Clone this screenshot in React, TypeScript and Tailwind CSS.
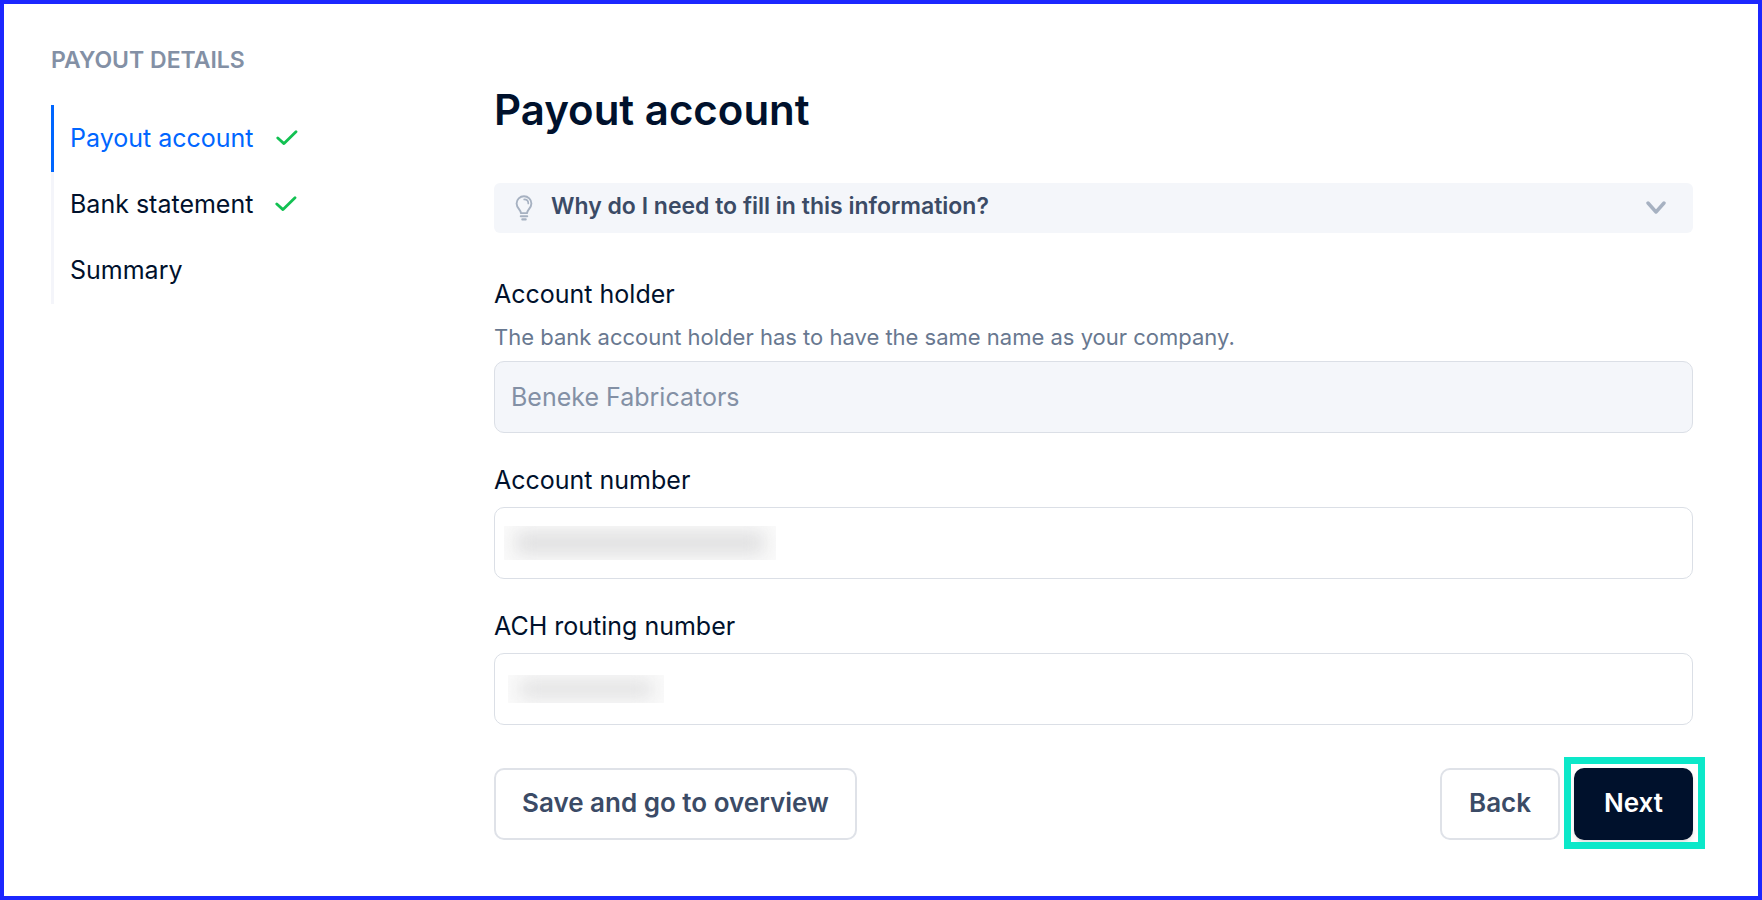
import * as React from 'react'

const steps = [
  { label: 'Payout account', done: true, active: true },
  { label: 'Bank statement', done: true, active: false },
  { label: 'Summary', done: false, active: false },
]

export default function App() {
  return (
    <div className="flex min-h-screen border-4 border-[#1c27ff] bg-white pr-[65px] pl-[47px] font-['Inter','Liberation_Sans',sans-serif] text-[25px] leading-8 text-[#00112c]">
      <aside className="w-[443px] shrink-0 pt-10">
        <h2 className="text-[23px] font-semibold leading-8 text-[#8390a5]">PAYOUT DETAILS</h2>
        <nav aria-label="Payout details" className="mt-[29px]">
          <ul>
            {steps.map((step) => (
              <StepItem key={step.label} {...step} />
            ))}
          </ul>
        </nav>
      </aside>

      <main className="min-w-0 flex-1 pt-[81px] pb-14">
        <h1 className="text-[42px] font-semibold leading-[50px]">Payout account</h1>

        <button
          type="button"
          aria-expanded="false"
          className="mt-12 flex h-[50px] w-full items-center rounded-md bg-[#f4f6fa] pr-[27px] pl-[21px] text-[23px] font-semibold text-[#3b4b66]"
        >
          <BulbIcon />
          <span className="ml-[18px] pb-1">Why do I need to fill in this information?</span>
          <ChevronIcon />
        </button>

        <form onSubmit={(e) => e.preventDefault()}>
          <div className="mt-[45px]">
            <label htmlFor="holder" className="block">Account holder</label>
            <p id="holder-hint" className="mt-[11px] text-[22px] text-[#687890]">
              The bank account holder has to have the same name as your company.
            </p>
            <input
              id="holder"
              aria-describedby="holder-hint"
              defaultValue="Beneke Fabricators"
              disabled
              className="mt-2 block h-18 w-full rounded-[10px] border border-[#dbdfe6] bg-[#f4f6fa] px-4 text-[#8390a5]"
            />
          </div>

          <MaskedField id="account" label="Account number">
            <Mask className="left-[10px] h-[34px] w-[272px]" />
          </MaskedField>
          <MaskedField id="routing" label="ACH routing number">
            <Mask className="left-[14px] h-[28px] w-[156px]" />
          </MaskedField>

          <div className="mt-[43px] flex text-[26px] font-semibold">
            <button type="button" className="h-18 rounded-[10px] border-2 border-[#dfe2e8] px-[26px] pb-0.5 text-[#3b4b66]">
              Save and go to overview
            </button>
            <button type="button" className="ml-auto h-18 rounded-[10px] border-2 border-[#dfe2e8] px-[27px] pb-0.5 text-[#3b4b66]">
              Back
            </button>
            <div className="relative ml-[14px]">
              <button type="submit" className="h-18 rounded-[10px] bg-[#00112c] px-[30px] pb-0.5 text-white shadow-md">
                Next
              </button>
              <span className="pointer-events-none absolute -top-[11px] -right-3 -bottom-[9px] -left-[10px] border-7 border-[#0ce8c9]" />
            </div>
          </div>
        </form>
      </main>
    </div>
  )
}

function StepItem({ label, done, active }: { label: string; done: boolean; active: boolean }) {
  return (
    <li>
      <a
        href="#"
        aria-current={active ? 'step' : undefined}
        className={
          active
            ? 'flex h-[67px] items-center border-l-3 border-[#0066ff] pb-0.5 pl-4 text-[#0066ff]'
            : 'flex h-[66px] items-center border-l-3 border-[#f4f5fa] pb-0.5 pl-4'
        }
      >
        {label}
        {done && <CheckIcon />}
      </a>
    </li>
  )
}

function MaskedField({ id, label, children }: { id: string; label: string; children: React.ReactNode }) {
  return (
    <div className="mt-[31px]">
      <label htmlFor={id} className="block">{label}</label>
      <div className="relative mt-[11px]">
        <input id={id} className="block h-18 w-full rounded-[10px] border border-[#dbdfe6] bg-white px-4" />
        {children}
      </div>
    </div>
  )
}

// blurred strip that hides a sensitive value
function Mask({ className }: { className: string }) {
  return (
    <div className={`pointer-events-none absolute top-1/2 -translate-y-1/2 overflow-hidden bg-[#fafafa] ${className}`}>
      <div className="mx-3 my-1.5 h-[calc(100%-12px)] bg-[#dfdfe0] blur-[9px]" />
    </div>
  )
}

function CheckIcon() {
  return (
    <svg width="22" height="16" viewBox="0 0 22 16" fill="none" aria-hidden="true" className="ml-[22px]">
      <path d="M1.8 8 8 13.6 20 1.8" stroke="#12c152" strokeWidth="2.8" strokeLinecap="round" strokeLinejoin="round" />
    </svg>
  )
}

function BulbIcon() {
  return (
    <svg width="18" height="26" viewBox="0 0 18 26" fill="none" stroke="#a6b1c1" strokeLinecap="round" aria-hidden="true">
      <path d="M6 18.1C5.8 14.6 1.6 13.2 1.6 8.5a7.4 7.2 0 0 1 14.8 0c0 4.7-4.2 6.1-4.4 9.6Z" strokeWidth="1.9" strokeLinejoin="round" />
      <path d="M9.2 4.4c2.5 0 4.1 1.6 4.1 4" strokeWidth="1.7" />
      <path d="M5.8 21.2h6.4" strokeWidth="2.1" />
      <path d="M7.3 24.4h3.4" strokeWidth="2.1" />
    </svg>
  )
}

function ChevronIcon() {
  return (
    <svg width="20" height="14" viewBox="0 0 20 14" fill="none" aria-hidden="true" className="ml-auto">
      <path d="M2 2l8 9 8-9" stroke="#a6b1c1" strokeWidth="3.4" strokeLinecap="round" strokeLinejoin="round" />
    </svg>
  )
}
